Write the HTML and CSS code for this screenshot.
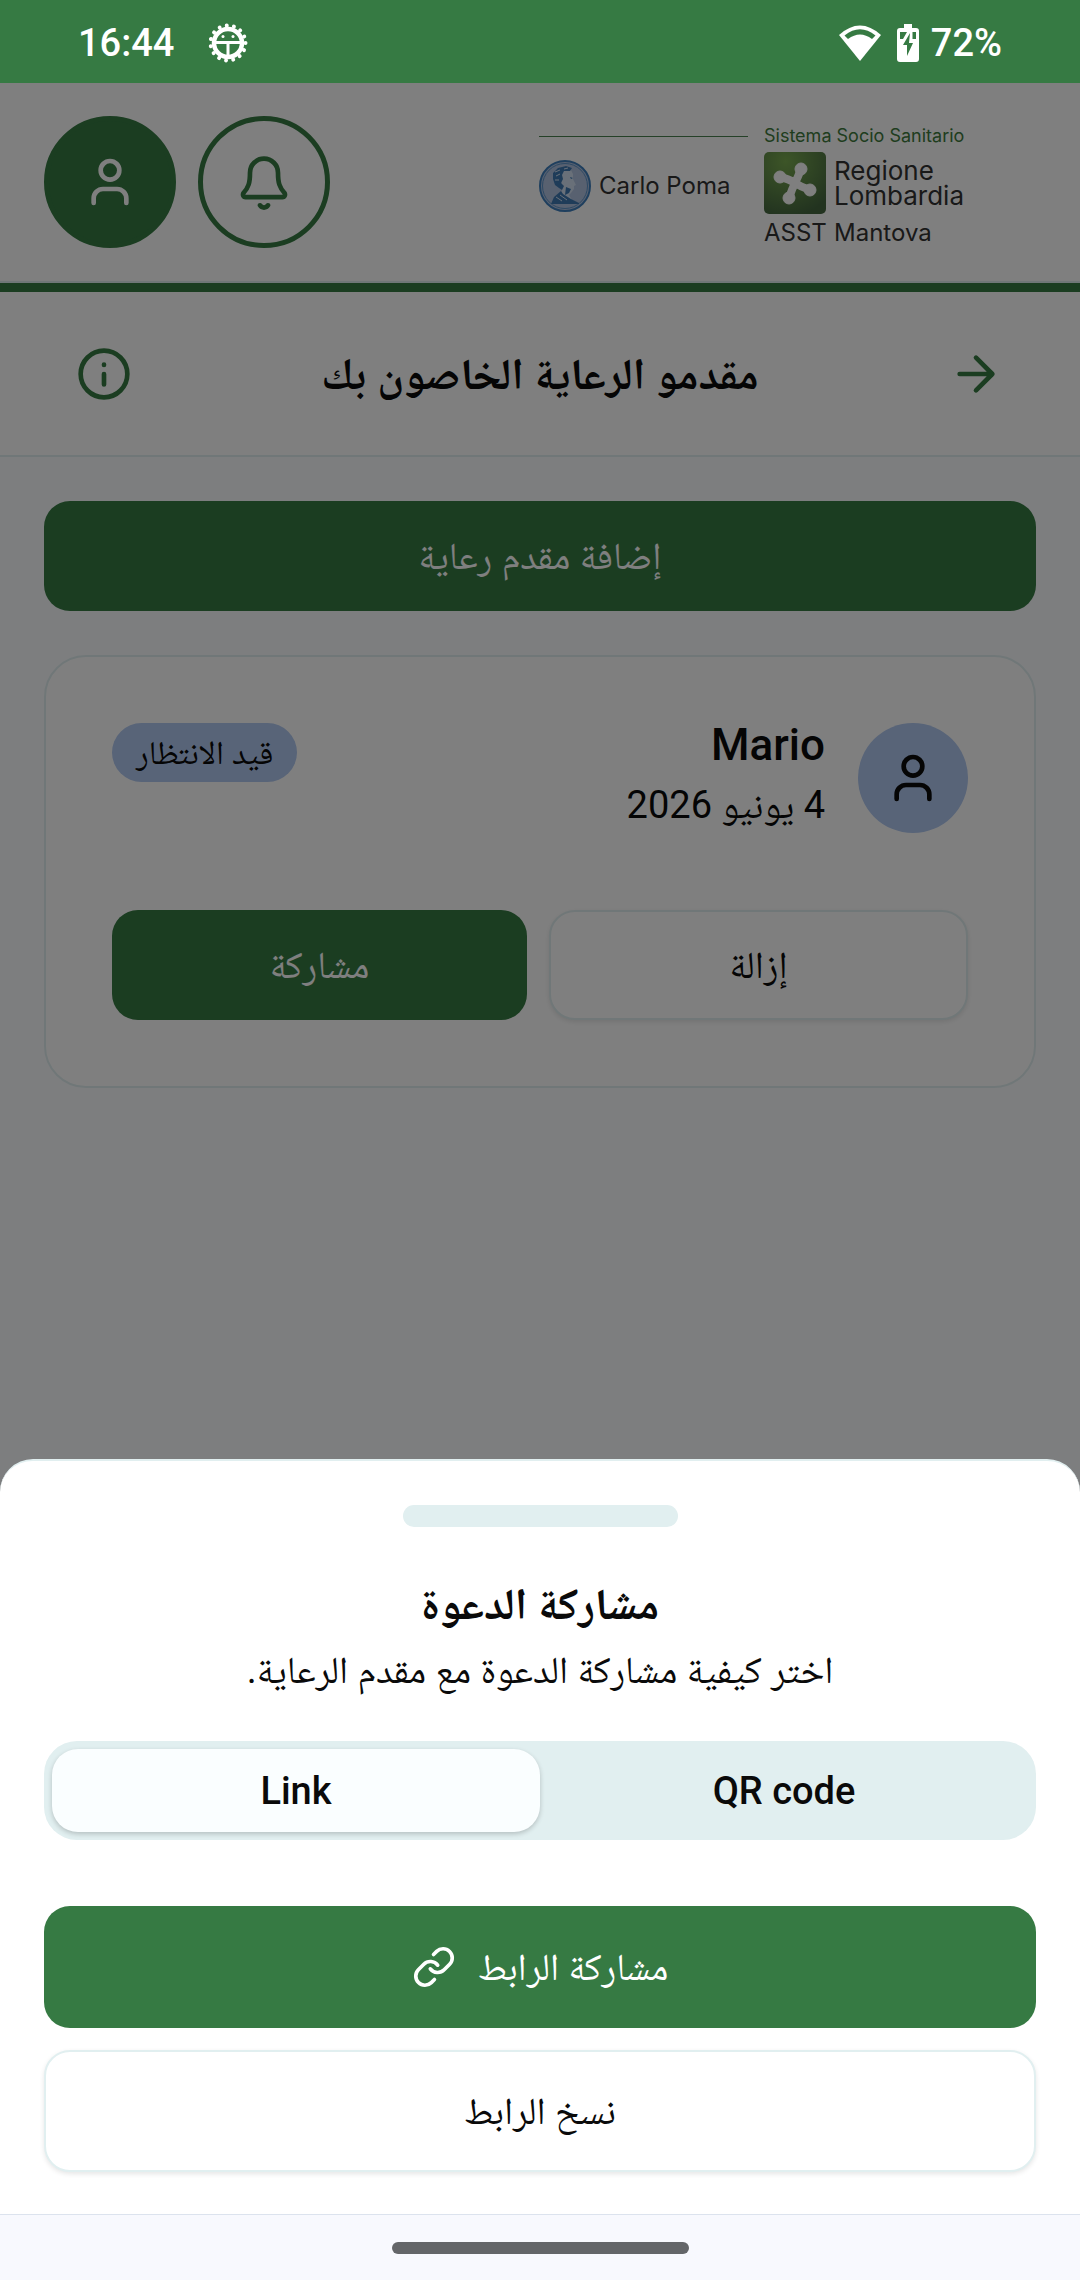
FILE: index.html
```html
<!DOCTYPE html>
<html lang="ar" dir="rtl">
<head>
  <meta charset="UTF-8">
  <meta name="viewport" content="width=device-width, initial-scale=1.0">
  <title>مقدمو الرعاية الخاصون بك</title>
  <link rel="stylesheet" href="styles.css">
</head>
<body>
  <div class="status-bar" dir="ltr">
    <div class="status-group">
      <span>16:44</span>
      <svg class="debug-icon" viewBox="0 0 40 40" aria-hidden="true">
        <circle cx="20" cy="20" r="17.500" fill="none" stroke="#fff" stroke-width="4" stroke-linecap="round" stroke-dasharray=".01 7.320"/>
        <circle cx="20" cy="20" r="14" fill="none" stroke="#fff" stroke-width="4.500"/>
        <path d="M7 19.500h26M20 20v14" stroke="#fff" stroke-width="3" fill="none"/>
        <circle cx="15" cy="13.500" r="1.500" fill="#fff"/>
        <circle cx="25" cy="13.500" r="1.500" fill="#fff"/>
      </svg>
    </div>
    <div class="status-group status-right">
      <svg class="wifi-icon" viewBox="0 0 42 36" aria-hidden="true">
        <path d="M21 36L0 10Q21-9 42 10z" fill="#fff"/>
        <path d="M5.500 10.500Q21-2 36.500 10.500L33 14Q21 5 9 14z" fill="#367a43"/>
      </svg>
      <svg class="battery-icon" viewBox="0 0 22 38" aria-hidden="true">
        <path d="M7 0h8v4h4q3 0 3 3v28q0 3-3 3H3q-3 0-3-3V7q0-3 3-3h4z" fill="#fff"/>
        <path d="M3 8h7l-4 7H3zM15.500 8H19v7h-3.500z" fill="#367a43"/>
        <path d="M13 9L6 21h4v11l6-13h-4z" fill="#367a43"/>
      </svg>
      <span>72%</span>
    </div>
  </div>

  <div class="screen">
    <header class="app-header" dir="ltr">
      <div class="header-actions">
        <button type="button" class="round-button filled" aria-label="الملف الشخصي">
          <svg viewBox="0 0 24 24" aria-hidden="true">
            <circle cx="12" cy="7" r="4"/>
            <path d="M5 21v-2a4 4 0 0 1 4-4h6a4 4 0 0 1 4 4v2"/>
          </svg>
        </button>
        <button type="button" class="round-button" aria-label="الإشعارات">
          <svg viewBox="0 0 24 24" aria-hidden="true">
            <path d="M12 2a6 6 0 0 0-6 6c0 4.500-.7 6.300-2.700 8.600-.6.800-.2 1.900.8 1.900h15.800c1 0 1.400-1.100.8-1.900C18.700 14.300 18 12.500 18 8a6 6 0 0 0-6-6zM10.300 22a2 2 0 0 0 3.400 0"/>
          </svg>
        </button>
      </div>
      <div class="brand">
        <div class="brand-hospital">
          <svg class="medal" viewBox="0 0 52 52" aria-hidden="true">
            <circle cx="26" cy="26" r="25" fill="#b0c2e0" stroke="#3f7fbd" stroke-width="2"/>
            <circle cx="26" cy="26" r="22.500" fill="none" stroke="#5b92c8"/>
            <path d="M22 9l9-1 3 6 0 5 3 6-2 1 0 3-3 4-2 2 3 5 8 4H13l4-8 6-5z" fill="#d2e0f2"/>
            <path d="M14 19l0-6 5-5 8-2 6 2-2 3-6 0-2 4 1 4-2 4 3 3-2 4-3-2-4-3zM12 44l3-7 7-6 2 3 8 5 8 4v1zM31 17l3 1-2 1zM27 27l5 2-2 4-4 2z" fill="#3f79b2"/>
            <path d="M16 12l5-2M17 16l4-2M16 20l4 0M17 37l6 4M21 35l7 5M25 9l4-1" stroke="#d2e0f2" fill="none"/>
          </svg>
          <span>Carlo Poma</span>
        </div>
        <div class="brand-region">
          <span class="brand-system">Sistema Socio Sanitario</span>
          <svg class="region-logo" viewBox="0 0 62 62" aria-hidden="true">
            <defs>
              <radialGradient id="leaf" cx=".35" cy=".15" r=".9">
                <stop offset="0" stop-color="#7aab50"/>
                <stop offset="1" stop-color="#44663f"/>
              </radialGradient>
            </defs>
            <rect width="62" height="62" rx="5" fill="url(#leaf)"/>
            <g fill="#fff" stroke="#fff">
              <circle cx="37" cy="17" r="6"/>
              <circle cx="16" cy="25" r="6"/>
              <circle cx="46" cy="38" r="6"/>
              <circle cx="25" cy="46" r="6"/>
              <path d="M37 17Q34 25 31 31T25 46M16 25Q25 27 31 31T46 38" fill="none" stroke-width="8"/>
            </g>
          </svg>
          <span class="brand-name">Regione<br>Lombardia</span>
          <span class="brand-asst">ASST</span>
          <span class="brand-asst">Mantova</span>
        </div>
      </div>
    </header>

    <div class="title-bar">
      <button type="button" class="icon-button" aria-label="رجوع">
        <svg viewBox="0 0 24 24" aria-hidden="true"><path d="M5 12h14M12 5l7 7-7 7"/></svg>
      </button>
      <h1>مقدمو الرعاية الخاصون بك</h1>
      <button type="button" class="icon-button" aria-label="معلومات">
        <svg viewBox="0 0 24 24" aria-hidden="true"><circle cx="12" cy="12" r="10"/><path d="M12 12v4.500M12 8v.1"/></svg>
      </button>
    </div>

    <main class="content">
      <button type="button" class="button primary">إضافة مقدم رعاية</button>
      <section class="card">
        <div class="caregiver">
          <div class="avatar">
            <svg viewBox="0 0 24 24" aria-hidden="true">
              <circle cx="12" cy="7" r="4"/>
              <path d="M5 21v-2a4 4 0 0 1 4-4h6a4 4 0 0 1 4 4v2"/>
            </svg>
          </div>
          <div class="caregiver-info">
            <h2>Mario</h2>
            <p>4 يونيو 2026</p>
          </div>
          <span class="badge">قيد الانتظار</span>
        </div>
        <div class="card-actions">
          <button type="button" class="button secondary">إزالة</button>
          <button type="button" class="button primary">مشاركة</button>
        </div>
      </section>
    </main>

    <div class="backdrop"></div>

    <section class="sheet" role="dialog" aria-labelledby="sheet-title">
      <div class="handle"></div>
      <h2 id="sheet-title">مشاركة الدعوة</h2>
      <p>اختر كيفية مشاركة الدعوة مع مقدم الرعاية.</p>
      <div class="tabs" role="tablist" dir="ltr">
        <button type="button" class="tab active" role="tab" aria-selected="true">Link</button>
        <button type="button" class="tab" role="tab" aria-selected="false">QR code</button>
      </div>
      <div class="sheet-actions">
        <button type="button" class="button primary large">
          <span>مشاركة الرابط</span>
          <svg viewBox="0 0 24 24" aria-hidden="true">
            <path d="M10 13a5 5 0 0 0 7.540.540l3-3a5 5 0 0 0-7.070-7.070l-1.720 1.710"/>
            <path d="M14 11a5 5 0 0 0-7.540-.540l-3 3a5 5 0 0 0 7.070 7.070l1.710-1.710"/>
          </svg>
        </button>
        <button type="button" class="button secondary large">نسخ الرابط</button>
      </div>
    </section>
  </div>

  <div class="nav-bar">
    <div class="nav-pill"></div>
  </div>
</body>
</html>
```
FILE: styles.css
```css
* {
  box-sizing: border-box;
}
body {
  margin: 0;
  min-height: 100vh;
  display: flex;
  flex-direction: column;
  font-family: Roboto, "Noto Naskh Arabic", "Noto Sans Arabic", serif;
  font-size: 38px;
  color: #0a0a0a;
  background: #fafcff;
}
h1, h2, p {
  margin: 0;
}
button {
  font: inherit;
  color: inherit;
  border: none;
  background: none;
  padding: 0;
  cursor: pointer;
}
svg {
  display: block;
  flex: none;
}

/* System status bar */
.status-bar {
  display: flex;
  justify-content: space-between;
  align-items: center;
  height: 83px;
  padding: 2px 78px 0;
  background: #367a43;
  color: #fff;
  font-weight: 500;
}
.status-group {
  display: flex;
  align-items: center;
  gap: 34px;
}
.status-right {
  gap: 12px;
}
.debug-icon {
  width: 40px;
  height: 40px;
}
.wifi-icon {
  width: 42px;
  height: 36px;
  margin-right: 4px;
}
.battery-icon {
  width: 22px;
  height: 38px;
}

.screen {
  position: relative;
  flex: 1;
  display: flex;
  flex-direction: column;
}

/* App header */
.app-header {
  display: flex;
  justify-content: space-between;
  align-items: flex-start;
  padding: 33px 110px 33px 44px;
  background: #fff;
  border-bottom: 2px solid #e1eff0;
}
.header-actions {
  display: flex;
  gap: 22px;
}
.round-button {
  display: flex;
  align-items: center;
  justify-content: center;
  width: 132px;
  height: 132px;
  border: 5px solid #367a43;
  border-radius: 50%;
  color: #367a43;
}
.round-button.filled {
  background: #367a43;
  color: #fff;
}
.round-button svg,
.icon-button svg,
.avatar svg,
.button svg {
  width: 56px;
  height: 56px;
  fill: none;
  stroke: currentColor;
  stroke-width: 2;
  stroke-linecap: round;
  stroke-linejoin: round;
}
.brand {
  display: flex;
  gap: 16px;
  padding-top: 8px;
  font-family: Inter, sans-serif;
  color: #333;
}
.brand-hospital {
  display: flex;
  align-items: center;
  gap: 8px;
  width: 209px;
  height: 98px;
  margin-top: 12px;
  border-top: 1px solid #4b8350;
  font-size: 24px;
}
.medal {
  width: 52px;
  height: 52px;
}
.brand-region {
  display: grid;
  grid-template-columns: 62px 136px;
  column-gap: 8px;
  row-gap: 4px;
  align-items: center;
}
.brand-system {
  grid-column: 1 / 3;
  font-size: 18px;
  line-height: 24px;
  color: #3f7a3c;
}
.region-logo {
  width: 62px;
  height: 62px;
}
.brand-name {
  font-size: 26px;
  line-height: 25px;
}
.brand-asst {
  font-size: 24px;
  line-height: 30px;
}

.title-bar {
  display: flex;
  align-items: center;
  justify-content: space-between;
  height: 174px;
  padding: 0 76px;
  background: #fff;
  border-top: 9px solid #367a43;
  border-bottom: 2px solid #e1eff0;
}
.title-bar h1 {
  font-size: 44px;
  line-height: 66px;
}
.icon-button {
  color: #367a43;
}

/* Caregiver list */
.content {
  display: flex;
  flex-direction: column;
  gap: 44px;
  padding: 44px;
}
.button {
  display: flex;
  align-items: center;
  justify-content: center;
  gap: 22px;
  height: 110px;
  border-radius: 26px;
  line-height: 58px;
}
.button.large {
  height: 122px;
}
.button svg {
  width: 44px;
  height: 44px;
}
.primary {
  background: #367a43;
  color: #fff;
}
.secondary {
  background: #fff;
  border: 2px solid #e1eff0;
  box-shadow: 0 2px 5px rgba(0, 0, 0, 0.1);
}
.card {
  padding: 66px;
  background: #fff;
  border: 2px solid #e1eff0;
  border-radius: 42px;
}
.caregiver {
  display: flex;
  align-items: flex-start;
  gap: 33px;
}
.avatar {
  display: flex;
  align-items: center;
  justify-content: center;
  width: 110px;
  height: 110px;
  border-radius: 50%;
  background: #b0c8f0;
}
.caregiver-info {
  flex: 1;
}
.caregiver-info h2 {
  font-size: 44px;
  font-weight: 500;
  line-height: 44px;
}
.caregiver-info p {
  line-height: 77px;
}
.badge {
  padding: 0 24px;
  border-radius: 30px;
  background: #b0c8f0;
  font-size: 33px;
  line-height: 59px;
}
.card-actions {
  display: flex;
  gap: 22px;
  margin-top: 66px;
}
.card-actions .button {
  flex: 1;
}

/* Share sheet */
.backdrop {
  position: absolute;
  inset: 0;
  background: rgba(0, 0, 0, 0.5);
}
.sheet {
  position: absolute;
  left: 0;
  right: 0;
  bottom: 0;
  padding: 44px 44px 42px;
  background: #fff;
  border-top: 2px solid #e1eff0;
  border-radius: 33px 33px 0 0;
  text-align: center;
}
.handle {
  width: 275px;
  height: 22px;
  margin: 0 auto 44px;
  border-radius: 11px;
  background: #e1eff0;
}
.sheet h2 {
  font-size: 44px;
  line-height: 66px;
}
.sheet p {
  line-height: 66px;
}
.tabs {
  display: flex;
  height: 99px;
  margin-top: 38px;
  padding: 8px;
  border-radius: 33px;
  background: #e1eff0;
}
.tab {
  flex: 1;
  border-radius: 26px;
  font-weight: 500;
}
.tab.active {
  background: #fafeff;
  box-shadow: 0 2px 5px rgba(0, 0, 0, 0.2);
}
.sheet-actions {
  display: flex;
  flex-direction: column;
  gap: 22px;
  margin-top: 66px;
}

.nav-bar {
  display: flex;
  align-items: center;
  justify-content: center;
  height: 66px;
  background: #f8f9fe;
  border-top: 1px solid #dce3ee;
}
.nav-pill {
  width: 297px;
  height: 12px;
  border-radius: 6px;
  background: #646669;
}
```
